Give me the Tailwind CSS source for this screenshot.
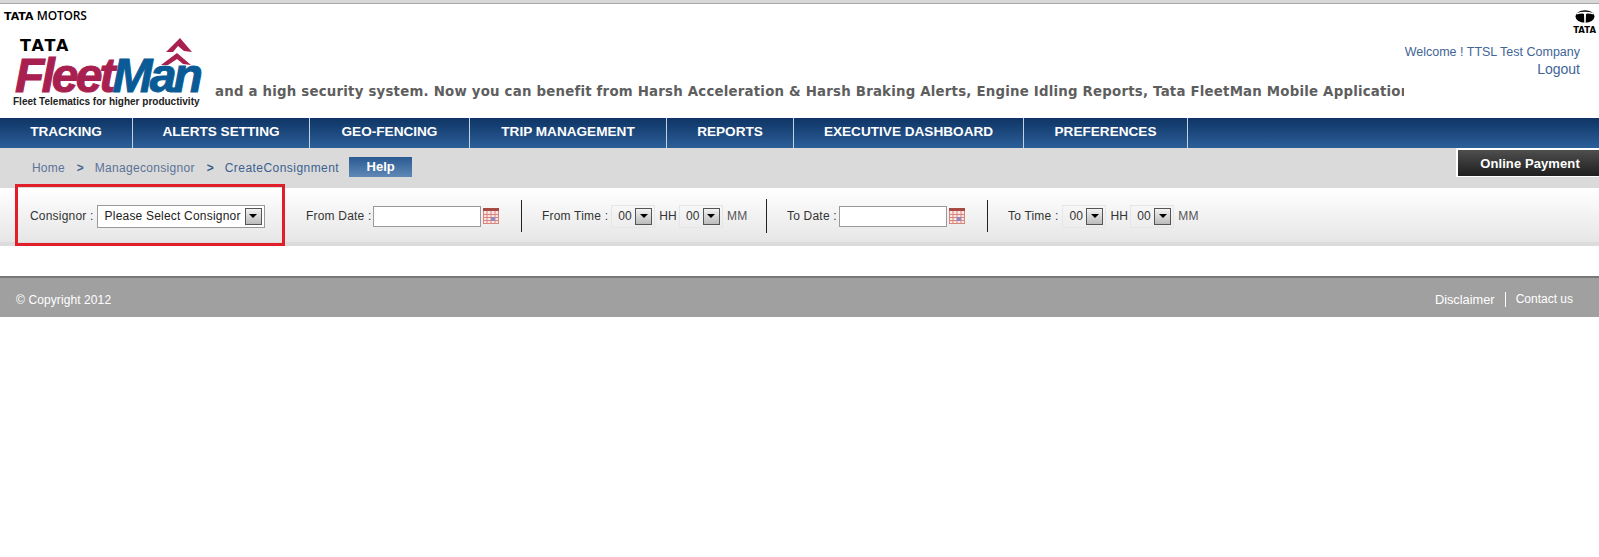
<!DOCTYPE html>
<html><head><meta charset="utf-8"><script src="https://cdn.jsdelivr.net/npm/@tailwindcss/browser@4"></script></head>
<body class="bg-white font-['Liberation_Sans',Arial,sans-serif] h-[557px] overflow-hidden">
<div class="relative w-[1599px]">
  <div class="h-[4px] bg-[#d8d8d8] border-b border-[#a8a8a8]"></div>
  <header class="h-[114px] flex relative">
    <div class="w-[215px] shrink-0 pl-[4px] pt-[5px] flex flex-col">
      <div class="text-[12px] leading-[14px] text-black whitespace-nowrap"><span class="font-['DejaVu_Sans',sans-serif] font-bold text-[11px]">TATA</span> <span class="font-['Open_Sans',sans-serif] font-semibold tracking-[-0.2px]">MOTORS</span></div>
      <div class="relative ml-[10px] mt-[14px] w-[195px] flex flex-col">
        <div class="pl-[6px] font-['DejaVu_Sans',sans-serif] text-[16px] leading-[16px] font-bold text-black tracking-[1.8px]">TATA</div>
        <svg class="absolute left-[147px] top-0" width="32" height="27" viewBox="0 0 32 27"><path d="M5 14 L19 0 L31 14 L23 13 L17 8 L12 14Z" fill="#a8204f"/><path d="M0 27 L16 15 L30 27 L22 26 L16 21 L7 27Z" fill="#a8204f"/></svg>
        <div class="pl-[1px] mt-[4px] text-[48px] leading-[36px] italic font-bold tracking-[-2.9px] whitespace-nowrap"><span class="text-[#a8204f] [-webkit-text-stroke:1px_#a8204f]">Fleet</span><span class="text-[#0a5a96] [-webkit-text-stroke:1px_#0a5a96]">Man</span></div>
        <div class="ml-[-1px] mt-[2px] text-[10px] leading-[12px] font-bold text-[#222] whitespace-nowrap">Fleet Telematics for higher productivity</div>
      </div>
    </div>
    <div class="w-[1189px] shrink-0 overflow-hidden pt-[80px]">
      <div class="font-['DejaVu_Sans',sans-serif] font-bold text-[13.33px] leading-[16px] text-[#5e5e5e] whitespace-nowrap tracking-[0.21px]">and a high security system. Now you can benefit from Harsh Acceleration &amp; Harsh Braking Alerts, Engine Idling Reports, Tata FleetMan Mobile Application and more.</div>
    </div>
    <div class="flex-1 relative text-right pr-[19px] pt-[40px] text-[#3f6596]">
      <div class="text-[12.5px] leading-[16px] whitespace-nowrap">Welcome ! TTSL Test Company</div>
      <div class="text-[14px] leading-[18px]">Logout</div>
      <div class="absolute right-[3px] top-[6px] flex flex-col items-center">
        <svg width="20" height="13" viewBox="0 0 20 13"><ellipse cx="10" cy="6.5" rx="9.5" ry="6.2" fill="#000"/><path d="M1.5 3 Q10 0.5 18.5 3 L18.5 4.4 Q12 3 11 4 L10.7 13 L9.3 13 L9 4 Q8 3 1.5 4.4Z" fill="#fff"/></svg>
        <div class="font-['DejaVu_Sans',sans-serif] text-[8.5px] leading-[10px] mt-[2px] font-bold text-black">TATA</div>
      </div>
    </div>
  </header>
  <nav class="h-[30px] flex bg-linear-to-b from-[#0e3565] to-[#2c5f99] text-white font-bold text-[13.6px] leading-[28px]">
    <a class="w-[133px] text-center border-r border-[#c3d2e2]">TRACKING</a>
    <a class="w-[177px] text-center border-r border-[#c3d2e2]">ALERTS SETTING</a>
    <a class="w-[160px] text-center border-r border-[#c3d2e2]">GEO-FENCING</a>
    <a class="w-[197px] text-center border-r border-[#c3d2e2]">TRIP MANAGEMENT</a>
    <a class="w-[127px] text-center border-r border-[#c3d2e2]">REPORTS</a>
    <a class="w-[230px] text-center border-r border-[#c3d2e2]">EXECUTIVE DASHBOARD</a>
    <a class="w-[164px] text-center border-r border-[#c3d2e2]">PREFERENCES</a>
  </nav>
  <div class="h-[40px] bg-[#dadada] flex items-start relative text-[12px] text-[#5a7396] pl-[32px] pt-[11px]">
    <span class="leading-[18px] tracking-[0.2px]">Home</span>
    <span class="leading-[18px] ml-[12px] font-bold text-[#4b648a]">&gt;</span>
    <span class="leading-[18px] ml-[11px] tracking-[0.3px]">Manageconsignor</span>
    <span class="leading-[18px] ml-[12px] font-bold text-[#3c5a88]">&gt;</span>
    <span class="leading-[18px] ml-[11px] text-[#3c6190] tracking-[0.45px]">CreateConsignment</span>
    <span class="ml-[10px] mt-[-2px] w-[63px] h-[20px] bg-linear-to-b from-[#2a5a92] to-[#5f88b6] text-white font-bold text-[13px] leading-[20px] text-center">Help</span>
    <a class="absolute right-0 top-0 w-[143px] h-[29px] border-l-2 border-t-2 border-b border-white bg-linear-to-b from-[#4f4f4f] to-[#1f1f1f] text-white font-bold text-[13px] leading-[27px] text-center pl-[3px] tracking-[0.1px]">Online Payment</a>
  </div>
  <div class="h-[58px] bg-linear-to-b from-white to-[#e6e6e6] border-b-[4px] border-[#dcdcdc] flex items-center text-[12px] text-[#333] relative pt-[2px] tracking-[0.2px]">
    <div class="flex items-center w-[285px] pl-[30px] shrink-0 h-[40px] border-r border-[#222]">
      <span class="mr-[3px]">Consignor :</span>
      <span class="w-[168px] h-[23px] bg-white border border-[#999] flex items-center justify-between pl-[7px] pr-[2px] text-[12px] text-[#222]">Please Select Consignor
        <i class="w-[17px] h-[17px] border border-[#555] bg-linear-to-b from-[#f2f2f2] to-[#bbb] flex items-center justify-center not-italic"><b class="block w-0 h-0 border-x-[4px] border-x-transparent border-t-[4px] border-t-black"></b></i>
      </span>
    </div>
    <div class="flex items-center w-[237px] pl-[21px] shrink-0 h-[32px] border-r border-[#222]">
      <span class="mr-[1px]">From Date :</span>
      <span class="w-[108px] h-[21px] bg-white border border-[#999]"></span>
      <svg class="ml-[2px]" width="16" height="16" viewBox="0 0 16 16"><rect x="0.5" y="0.5" width="15" height="15" fill="#fbe6e4" stroke="#d9857c"/><rect x="0" y="0" width="16" height="3" fill="#a84a44"/><path d="M0 6.5H16M0 9.5H16M0 12.5H16M4 3V16M8 3V16M12 3V16" stroke="#d9857c" stroke-width="1"/><rect x="8" y="9" width="4" height="4" fill="#8a8ac8"/></svg>
    </div>
    <div class="flex items-center w-[245px] pl-[20px] shrink-0 h-[34px] border-r border-[#222]">
      <span class="mr-[3px]">From Time :</span>
      <span class="w-[44px] h-[23px] border border-[#e6e6e6] flex items-center justify-between pl-[6px] pr-[2px] text-[#333]">00 <i class="w-[17px] h-[17px] border border-[#555] bg-linear-to-b from-[#f2f2f2] to-[#bbb] flex items-center justify-center"><b class="block w-0 h-0 border-x-[4px] border-x-transparent border-t-[4px] border-t-black"></b></i></span>
      <span class="ml-[4px] mr-[2px]">HH</span>
      <span class="w-[44px] h-[23px] border border-[#e6e6e6] flex items-center justify-between pl-[6px] pr-[2px] text-[#333]">00 <i class="w-[17px] h-[17px] border border-[#555] bg-linear-to-b from-[#f2f2f2] to-[#bbb] flex items-center justify-center"><b class="block w-0 h-0 border-x-[4px] border-x-transparent border-t-[4px] border-t-black"></b></i></span>
      <span class="ml-[4px] text-[#555]">MM</span>
    </div>
    <div class="flex items-center w-[221px] pl-[20px] shrink-0 h-[32px] border-r border-[#222]">
      <span class="mr-[2px]">To Date :</span>
      <span class="w-[108px] h-[21px] bg-white border border-[#999]"></span>
      <svg class="ml-[2px]" width="16" height="16" viewBox="0 0 16 16"><rect x="0.5" y="0.5" width="15" height="15" fill="#fbe6e4" stroke="#d9857c"/><rect x="0" y="0" width="16" height="3" fill="#a84a44"/><path d="M0 6.5H16M0 9.5H16M0 12.5H16M4 3V16M8 3V16M12 3V16" stroke="#d9857c" stroke-width="1"/><rect x="8" y="9" width="4" height="4" fill="#8a8ac8"/></svg>
    </div>
    <div class="flex items-center pl-[20px]">
      <span class="mr-[4px]">To Time :</span>
      <span class="w-[44px] h-[23px] border border-[#e6e6e6] flex items-center justify-between pl-[6px] pr-[2px] text-[#333]">00 <i class="w-[17px] h-[17px] border border-[#555] bg-linear-to-b from-[#f2f2f2] to-[#bbb] flex items-center justify-center"><b class="block w-0 h-0 border-x-[4px] border-x-transparent border-t-[4px] border-t-black"></b></i></span>
      <span class="ml-[4px] mr-[2px]">HH</span>
      <span class="w-[44px] h-[23px] border border-[#e6e6e6] flex items-center justify-between pl-[6px] pr-[2px] text-[#333]">00 <i class="w-[17px] h-[17px] border border-[#555] bg-linear-to-b from-[#f2f2f2] to-[#bbb] flex items-center justify-center"><b class="block w-0 h-0 border-x-[4px] border-x-transparent border-t-[4px] border-t-black"></b></i></span>
      <span class="ml-[4px] text-[#555]">MM</span>
    </div>
    <div class="absolute left-[15px] top-[-4px] w-[270px] h-[62px] border-[3px] border-[#e01f2a]"></div>
  </div>
  <div class="h-[30px]"></div>
  <footer class="h-[41px] bg-[#a0a0a0] border-t-2 border-[#787878] flex items-center justify-between text-white text-[12px] pl-[16px] pr-[26px] pt-[3px]">
    <span class="tracking-[0.1px] mt-[1px]">© Copyright 2012</span>
    <span class="flex items-center"><span class="pr-[10px] border-r border-white leading-[15px] text-[12.8px]">Disclaimer</span><span class="pl-[10px]">Contact us</span></span>
  </footer>
</div>
</body></html>
